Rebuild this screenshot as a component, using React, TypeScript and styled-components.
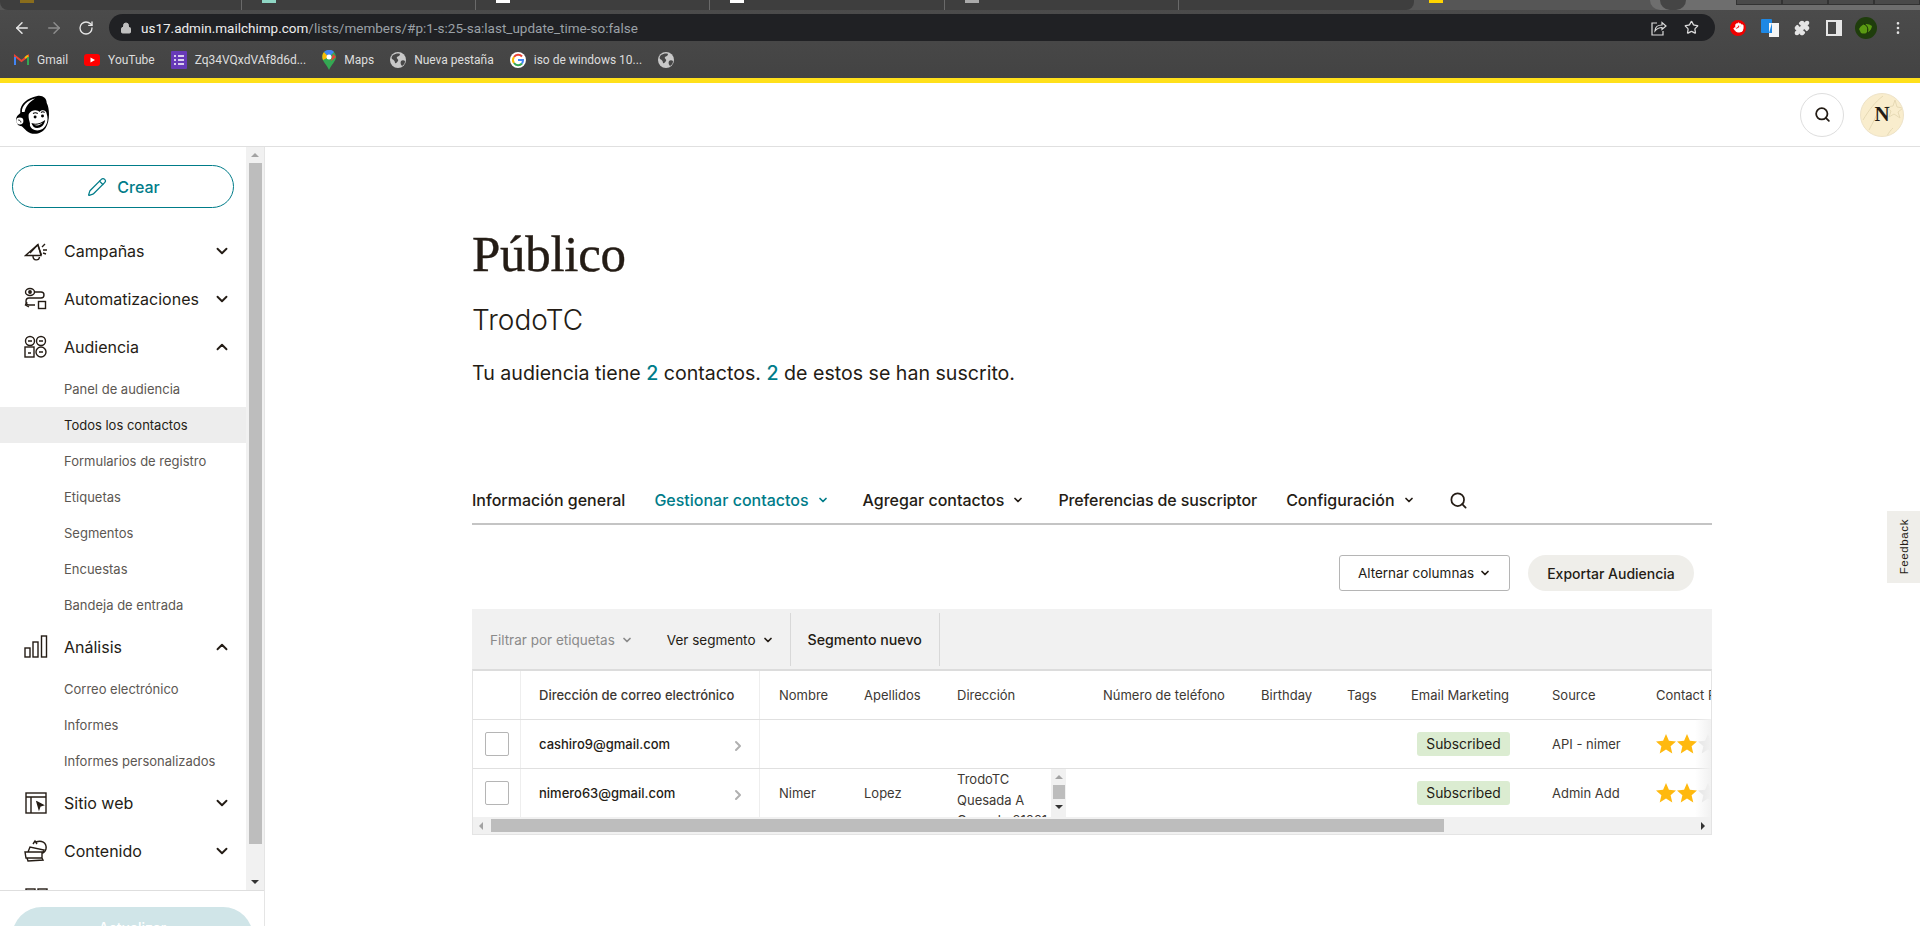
import React from "react";
import styled, { createGlobalStyle } from "styled-components";
import { ArrowLeft, ArrowRight, RotateCw, Lock, Star, Puzzle, EllipsisVertical, Search, Pencil, ChevronDown, ChevronUp, ChevronRight, Hand } from "lucide-react";

const Global = createGlobalStyle`
  html, body { margin: 0; height: 926px; overflow: hidden; background: #fff; }
  #root { height: 926px; }
  * { box-sizing: border-box; }
  body { font-family: Inter, "Liberation Sans", sans-serif; color: #241c15; }
`;

const Page = styled.div`display: flex; flex-direction: column; height: 926px; position: relative; overflow: hidden;`;
const Chrome = styled.div`height: 78px; background: linear-gradient(#4c4c4c, #434343); display: flex; flex-direction: column; font-family: Roboto, "Liberation Sans", sans-serif;`;
const TabStrip = styled.div`height: 10px; display: flex; background: #565656;`;
const TabsDark = styled.div`width: 1414px; height: 10px; background: #3e3e3e; border-radius: 0 0 8px 8px; display: flex;`;
const TabPiece = styled.div`width: 235px; height: 10px; border-right: 1px solid #6a6a6a; padding-left: 20px; &:first-child { width: 243px; }`;
const TabFav = styled.div<{ $c: string }>`width: 14px; height: 3px; background: ${p => p.$c};`;
const TabMid = styled.div`width: 236px; padding-left: 15px; display: flex;`;
const TabActive = styled.div`flex: 1; height: 10px; background: #6e6e6e; border-radius: 0 0 0 10px; display: flex; padding-left: 2px; justify-content: space-between;`;
const TabCircle = styled.div`width: 26px; height: 10px; background: #454545; border-radius: 0 0 13px 13px; margin-left: 8px;`;
const TabBoxes = styled.div`display: flex; width: 184px;`;
const TabBox = styled.div`flex: 1; height: 5px; background: #4a4a4a; border: 1px solid #333; border-top: 0;`;
const Toolbar = styled.div`height: 35px; padding-top: 4px; display: flex; align-items: flex-start;`;
const NavBtn = styled.div<{ $dim?: boolean }>`width: 32px; height: 27px; display: flex; align-items: center; justify-content: center; color: ${p => (p.$dim ? "#8d8d8d" : "#e6e6e6")};`;
const NavBtns = styled.div`display: flex; width: 109px; padding-left: 6px;`;
const AddressBar = styled.div`width: 1606px; height: 27px; border-radius: 14px; background: #202124; display: flex; align-items: center; padding: 0 8px 0 11px; color: #c0c0c0; font-size: 13.5px;`;
const Url = styled.div`margin-left: 9px; flex: 1; color: #9aa0a6; white-space: nowrap;`;
const UrlHost = styled.span`color: #eee;`;
const BarIcon = styled.div`width: 32px; display: flex; justify-content: center; color: #dcdcdc;`;
const Exts = styled.div`display: flex; flex: 1; padding-left: 7px; align-items: center; height: 27px;`;
const Ext = styled.div`width: 32px; display: flex; justify-content: center; align-items: center; color: #e4e4e4;`;
const Bookmarks = styled.div`height: 29px; display: flex; align-items: center; gap: 16px; padding: 0 0 0 14px; font-size: 12px; color: #ddd;`;
const Bookmark = styled.div`display: flex; align-items: center; gap: 8px; white-space: nowrap;`;
const Yellow = styled.div`height: 5px; background: #ffe01b;`;
const Header = styled.header`height: 64px; border-bottom: 1px solid #e0e0e0; display: flex; align-items: center; justify-content: space-between; padding: 0 16px 0 14px;`;
const HeaderRight = styled.div`display: flex; gap: 16px;`;
const RoundBtn = styled.div`width: 44px; height: 44px; border-radius: 50%; border: 1px solid #dedede; display: flex; align-items: center; justify-content: center; background: #fff;`;
const Avatar = styled.div`position: relative; width: 44px; height: 44px; border-radius: 50%; background: #f9edcd; border: 1px solid #eee3c8; display: flex; align-items: center; justify-content: center; overflow: hidden; font: bold 21px "Liberation Serif", serif;`;
const AvatarArt = styled.svg`position: absolute; inset: 0;`;
const AvatarLetter = styled.span`position: relative;`;

const Body = styled.div`flex: 1; display: flex; min-height: 0;`;
const Sidebar = styled.aside`width: 265px; border-right: 1px solid #e5e5e5; display: flex; flex-direction: column; flex: none;`;
const SideTop = styled.div`height: 744px; display: flex; border-bottom: 1px solid #dedede; overflow: hidden;`;
const Nav = styled.nav`width: 246px; padding-top: 18px; overflow: hidden;`;
const CreateBtn = styled.div`margin: 0 0 19px 12px; width: 222px; height: 43px; border: 1px solid #007c89; border-radius: 22px; display: flex; align-items: center; justify-content: center; gap: 10px; padding: 1px 0 0 1px; color: #007c89; font-weight: 500; font-size: 16px;`;
const NavRow = styled.div`height: 48px; display: flex; align-items: center; padding-left: 24px; font-size: 16px; flex: none;`;
const NavIcon = styled.div`width: 40px; display: flex;`;
const NavLabel = styled.div`flex: 1;`;
const NavChev = styled.div`width: 33px; display: flex;`;
const SubRow = styled.div<{ $active?: boolean }>`height: 36px; display: flex; align-items: center; padding-left: 64px; font-size: 13px; color: ${p => (p.$active ? "#241c15" : "#5c5752")}; background: ${p => (p.$active ? "#ededed" : "transparent")};`;
const SideScroll = styled.div`width: 18px; background: #f1f1f1; display: flex; flex-direction: column; align-items: center;`;
const ArrowUp = styled.div<{ $c: string }>`width: 0; height: 0; border: 4px solid transparent; border-top: 0; border-bottom: 4px solid ${p => p.$c}; margin: 6px 0;`;
const ArrowDown = styled.div<{ $c: string }>`width: 0; height: 0; border: 4px solid transparent; border-bottom: 0; border-top: 4px solid ${p => p.$c}; margin: 6px 0;`;
const SideThumb = styled.div`width: 13px; height: 682px; background: #bdbdbd; margin-bottom: 30px;`;
const SideBottom = styled.div`flex: 1; padding: 16px 0 0 12px; overflow: hidden;`;
const UpgradeBtn = styled.div`width: 241px; height: 60px; border-radius: 30px; background: #d0e5e8; color: #fff; font-weight: 500; font-size: 14px; text-align: center; padding-top: 12px;`;

const Main = styled.main`flex: 1; padding: 78px 0 0 207px; min-width: 0;`;
const Column = styled.div`width: 1240px;`;
const Title = styled.h1`margin: 0; font: 400 51px/58px "Liberation Serif", serif; color: #241c15; letter-spacing: -.3px; -webkit-text-stroke: .4px #241c15;`;
const Subtitle = styled.div`margin-top: 20px; font-size: 28px; line-height: 34px; font-weight: 300;`;
const Summary = styled.div`margin-top: 21px; font-size: 19.6px; line-height: 30px;`;
const Num = styled.span`color: #007c89; font-weight: 500;`;
const Tabs = styled.div`margin-top: 93px; height: 44px; border-bottom: 2px solid #c4c4c4; display: flex; align-items: center; gap: 29px; padding-bottom: 4px; font-size: 16px; font-weight: 500;`;
const Tab = styled.div<{ $active?: boolean; $menu?: boolean; $tight?: boolean }>`display: flex; align-items: center; gap: 8px; white-space: nowrap; padding-right: ${p => (p.$menu ? "5px" : "0")}; letter-spacing: ${p => (p.$tight ? "-.12px" : "0")}; color: ${p => (p.$active ? "#007c89" : "#241c15")};`;
const Actions = styled.div`margin-top: 30px; display: flex; justify-content: flex-end; align-items: center; gap: 18px; padding-right: 18px;`;
const ColumnsBtn = styled.div`width: 171px; height: 36px; border: 1px solid #b5b5b5; border-radius: 3px; display: flex; align-items: center; justify-content: center; gap: 5px; font-size: 13.5px;`;
const ExportBtn = styled.div`width: 166px; height: 36px; border-radius: 18px; background: #efeeea; display: flex; align-items: center; justify-content: center; font-size: 14px; font-weight: 500;`;
const FilterBar = styled.div`margin-top: 18px; height: 60px; background: #f1f1f1; display: flex; align-items: stretch; padding: 4px 0 3px; font-size: 13.5px;`;
const Filter = styled.div<{ $muted?: boolean }>`display: flex; align-items: center; gap: 6px; white-space: nowrap; margin-left: ${p => (p.$muted ? "18px" : "34px")}; color: ${p => (p.$muted ? "#8a8a8a" : "#241c15")};`;
const Divider = styled.div`margin-left: 16px; display: flex; align-items: center; border-left: 1px solid #d8d8d8; border-right: 1px solid #d8d8d8; padding: 0 17px; font-size: 14.2px; font-weight: 500; white-space: nowrap;`;
const TableWrap = styled.div`position: relative; border: 1px solid #e4e4e4; border-top: 2px solid #dcdcdc; overflow: hidden;`;
const TableView = styled.div`height: 146px; overflow: hidden; font-size: 13px;`;
const Row = styled.div<{ $h: number }>`display: grid; grid-template-columns: 48px 239px 85px 93px 146px 158px 86px 64px 141px 104px 200px; height: ${p => p.$h}px; border-bottom: 1px solid #e0e0e0; width: 1364px;`;
const Cell = styled.div<{ $line?: boolean; $strong?: boolean }>`display: flex; align-items: center; padding-left: ${p => (p.$line ? "18px" : "19px")}; white-space: nowrap; overflow: hidden; border-right: ${p => (p.$line ? "1px solid #eee" : "0")}; font-weight: ${p => (p.$strong ? 500 : 400)}; color: #3d3833;`;
const EmailCell = styled(Cell)`justify-content: space-between; padding-right: 13px; font-weight: 500; color: #241c15;`;
const RowChevron = styled.span`display: flex; margin-top: 4px;`;
const CheckCell = styled.div`display: flex; align-items: center; padding-left: 12px; border-right: 1px solid #eee;`;
const Check = styled.div`width: 24px; height: 24px; border: 1px solid #b5b5b5; border-radius: 2px; background: #fff;`;
const AddressCell = styled.div`position: relative; padding-left: 19px; overflow: hidden; line-height: 20.5px; color: #3d3833;`;
const InnerBar = styled.div`position: absolute; left: 113px; top: 0; width: 15px; height: 48px; background: #f1f1f1; display: flex; flex-direction: column; align-items: center;`;
const InnerThumb = styled.div`width: 12px; height: 14px; background: #bdbdbd;`;
const Badge = styled.div`margin-left: 6px; width: 93px; height: 24px; border-radius: 3px; background: #dbecd1; display: flex; align-items: center; justify-content: center; color: #241c15; font-size: 13.8px;`;
const Stars = styled.div`display: flex; gap: 1px;`;
const Fade = styled.div`position: absolute; right: 0; top: 48px; bottom: 17px; width: 16px; background: linear-gradient(90deg, rgba(255,255,255,0), #f1f1f1);`;
const HBar = styled.div`height: 17px; background: #f1f1f1; display: flex; align-items: center; justify-content: space-between;`;
const HThumb = styled.div`width: 953px; height: 13px; background: #bdbdbd; margin-left: 18px;`;
const ArrowL = styled.div`position: absolute; left: 6px; width: 0; height: 0; border: 4px solid transparent; border-left: 0; border-right: 4px solid #a3a3a3;`;
const ArrowR = styled.div`width: 0; height: 0; margin-right: 6px; border: 4px solid transparent; border-right: 0; border-left: 4px solid #333;`;
const Feedback = styled.div`position: absolute; right: 0; top: 511px; width: 33px; height: 72px; background: #efeeea; display: flex; align-items: center; justify-content: center;`;
const FeedbackText = styled.span`writing-mode: vertical-rl; transform: rotate(180deg); font-size: 11.5px; letter-spacing: .6px; font-family: "Liberation Sans", sans-serif;`;
const BlockBadge = styled.div`width: 16px; height: 16px; border-radius: 50%; background: #e00; display: flex; align-items: center; justify-content: center; color: #fff;`;

const strokeProps = { fill: "none", stroke: "#241c15", strokeWidth: 1.4 };

const Monkey = () => (
  <svg width="38" height="40" viewBox="0 0 36 40" preserveAspectRatio="none">
    <path d="M6 18C5 10 12 3 22 1c5-1 9 2 9 7 3 6 3 18-1 25-4 6-12 8-18 3-3-3-4-5-6-5-4-1-5-7-3-10 1-1 2-2 3-3z" fill="#000" />
    <path d="M7.500 17C7 11 13 5 20 3.500 14 7 11 12 10 17z" fill="#fff" />
    <circle cx="5.500" cy="26" r="3.400" fill="#fff" />
    <path d="M4 25c1.500 0 2.500 1 2.500 2.500" fill="none" stroke="#000" strokeWidth=".9" />
    <path d="M14 19c3-5 9-4 10-2 2-3 7-2 7 2 2 6 0 12-4 15-5 3-11 1-12-4 1-2-2-6-1-11z" fill="#fff" />
    <circle cx="20" cy="22" r="1.400" fill="#000" />
    <circle cx="27" cy="21" r="1.400" fill="#000" />
    <path d="M18 18.500c1.500-1 3-1 4.500 0M25.500 17.500c1.200-.8 2.500-.8 3.500 0" fill="none" stroke="#000" strokeWidth="1" />
    <path d="M16.500 28c4 1.500 9 .5 13-3-.5 5-4 8-7.500 8-3 0-4.500-2-5.500-5z" fill="#000" />
    <path d="M19 29.500c3 .5 5.500-.3 8-2-1.500 2.500-5.500 4-8 2z" fill="#fff" />
  </svg>
);

const Megaphone = () => (
  <svg width="24" height="24" viewBox="0 0 24 24" {...strokeProps}>
    <path d="M1.500 16.500 14 5.500l3 11z" /><path d="M6 14l8-8.500M14 6.500l3.500 9.500" /><path d="M9 17c0 5 6 5 6.500 1" />
    <path d="M18 8l3-3M19 11h4M19 14l3 1" />
  </svg>
);
const Flow = () => (
  <svg width="24" height="24" viewBox="0 0 24 24" {...strokeProps}>
    <ellipse cx="6" cy="5" rx="4.500" ry="3.500" /><circle cx="6" cy="5" r="1.200" fill="#241c15" />
    <path d="M10 5h7c4 0 4 6 0 6H5c-4 0-4 7 0 7h6" /><path d="M3 15l-1.500 3L5 20" />
    <rect x="14.500" y="14.500" width="7" height="7" />
  </svg>
);
const People = () => (
  <svg width="24" height="24" viewBox="0 0 24 24" {...strokeProps}>
    <circle cx="6" cy="6" r="4.500" /><circle cx="17" cy="6" r="4.500" /><rect x="1" y="12" width="9" height="10" />
    <circle cx="17" cy="17" r="5" /><path d="M4 6h4M15 6h4M15 17h4M4 18h3" />
  </svg>
);
const Bars = () => (
  <svg width="24" height="24" viewBox="0 0 24 24" {...strokeProps}>
    <rect x="1" y="13" width="5" height="9" /><rect x="9" y="7" width="5" height="15" /><rect x="17.500" y="1" width="5" height="21" />
  </svg>
);
const Website = () => (
  <svg width="24" height="24" viewBox="0 0 24 24" {...strokeProps}>
    <rect x="2" y="2" width="20" height="20" /><path d="M2 6h20M7 6v16" />
    <path d="M13 11l6 3-3 1-1 3z" fill="#241c15" />
  </svg>
);
const Content = () => (
  <svg width="24" height="24" viewBox="0 0 24 24" {...strokeProps}>
    <path d="M1 13h17v6H2zM4 13l2-5 14 3-1 2M3 19l1 3 15-1-1-2" /><path d="M12 3c5-2 11 0 10 7-1 3-3 4-4 4" /><path d="M9 5l2-3 2 3" />
  </svg>
);
const Grid4 = () => (
  <svg width="24" height="24" viewBox="0 0 24 24" {...strokeProps}>
    <rect x="2" y="2" width="9" height="9" /><rect x="14" y="2" width="9" height="9" />
  </svg>
);

const GmailIcon = () => (
  <svg width="15" height="12" viewBox="0 0 15 12">
    <path d="M1 11V2l6.500 5L14 2v9" fill="none" stroke="#ea4335" strokeWidth="2" />
    <path d="M1 3v8" stroke="#4285f4" strokeWidth="2" /><path d="M14 3v8" stroke="#34a853" strokeWidth="2" /><path d="M11 4l3-2.500" stroke="#fbbc04" strokeWidth="2" />
  </svg>
);
const YouTubeIcon = () => (
  <svg width="16" height="16" viewBox="0 0 16 16"><rect y="2" width="16" height="12" rx="3" fill="#f00" /><path d="M6.500 5.500v5L11 8z" fill="#fff" /></svg>
);
const FormIcon = () => (
  <svg width="16" height="18" viewBox="0 0 16 18"><rect width="16" height="18" rx="1" fill="#673ab7" /><path d="M3 5h2M7 5h6M3 9h2M7 9h6M3 13h2M7 13h6" stroke="#fff" strokeWidth="1.600" /></svg>
);
const MapsIcon = () => (
  <svg width="14" height="20" viewBox="0 0 14 20"><path d="M7 0a7 7 0 0 1 7 7c0 4-5 8-7 13C5 15 0 11 0 7a7 7 0 0 1 7-7z" fill="#34a853" /><path d="M2 2l5 5-6 3C0 7 0 4 2 2z" fill="#fbbc04" /><path d="M2 2C5-1 10-1 12 2L7 7z" fill="#4285f4" /><circle cx="7" cy="7" r="2.500" fill="#fff" /><path d="M11 4l3 3-5 4z" fill="#ea4335" /></svg>
);
const GoogleIcon = () => (
  <svg width="16" height="16" viewBox="0 0 16 16">
    <circle cx="8" cy="8" r="8" fill="#fff" />
    <path d="M12 4.500A5 5 0 0 0 4 5" fill="none" stroke="#ea4335" strokeWidth="2" /><path d="M4 5a5 5 0 0 0 0 6" fill="none" stroke="#fbbc04" strokeWidth="2" />
    <path d="M4 11a5 5 0 0 0 8 .5" fill="none" stroke="#34a853" strokeWidth="2" /><path d="M8 8h5c0 1.500-.4 2.500-1 3.500" fill="none" stroke="#4285f4" strokeWidth="2" />
  </svg>
);
const GlobeFilled = () => (
  <svg width="16" height="16" viewBox="0 0 16 16">
    <circle cx="8" cy="8" r="8" fill="#c8c8c8" />
    <path d="M3 3c2-1 5-2 7-1 0 2-2 2-3 3-1 2 2 2 1 4-1 1-2 3-3 2 0-2-1-3-3-4-1-1 0-3 1-4zM11 9c1-1 3-1 4 0 0 2-1 4-3 5-1-1-2-3-1-5z" fill="#474747" />
  </svg>
);
const ShareIcon = () => (
  <svg width="16" height="16" viewBox="0 0 16 16" fill="none" stroke="#dcdcdc" strokeWidth="1.200">
    <path d="M6 3H1v12h11v-4" /><path d="M4 11c0-4 3-6 7-6V2.500L15 6l-4 3.500V7.500c-3 0-5 1-7 3.500z" />
  </svg>
);
const TranslateIcon = () => (
  <svg width="18" height="18" viewBox="0 0 18 18"><rect x="0" y="0" width="11" height="14" rx="1" fill="#1e88e5" /><rect x="8" y="4" width="10" height="14" fill="#f5f5f5" /><path d="M11 4l-3 10h3z" fill="#1e88e5" /></svg>
);
const ProfileIcon = () => (
  <svg width="22" height="22" viewBox="0 0 22 22"><circle cx="11" cy="11" r="11" fill="#1f3d0c" /><path d="M4 12c3-6 9-6 13-3-1 6-7 9-11 7z" fill="#5a9a12" /><path d="M9 7c3 1 5 5 3 9" stroke="#0e2006" fill="none" /></svg>
);
const PanelIcon = () => (
  <svg width="16" height="16" viewBox="0 0 16 16"><rect width="16" height="16" fill="#e6e6e6" /><rect x="2" y="2" width="8" height="12" fill="#474747" /></svg>
);
const StarShape = ({ c }: { c: string }) => (
  <svg width="20" height="20" viewBox="0 0 20 20"><path d="M10 0l2.900 6.800 7.100.7-5.400 4.700 1.700 7.300L10 15.600 3.700 19.500l1.700-7.300L0 7.500l7.100-.7z" fill={c} /></svg>
);
const StarRow = () => (
  <Stars><StarShape c="#ffb90f" /><StarShape c="#ffb90f" /><StarShape c="#e3e3e3" /></Stars>
);
const Down = ({ s = 12 }: { s?: number }) => <ChevronDown size={s} strokeWidth={3.5} />;

const main = [
  { icon: <Megaphone />, label: "Campañas" },
  { icon: <Flow />, label: "Automatizaciones" },
  { icon: <People />, label: "Audiencia", open: true, subs: ["Panel de audiencia", "Todos los contactos", "Formularios de registro", "Etiquetas", "Segmentos", "Encuestas", "Bandeja de entrada"] },
  { icon: <Bars />, label: "Análisis", open: true, subs: ["Correo electrónico", "Informes", "Informes personalizados"] },
  { icon: <Website />, label: "Sitio web" },
  { icon: <Content />, label: "Contenido" },
  { icon: <Grid4 />, label: "Integraciones" },
];

const headers = ["Nombre", "Apellidos", "Dirección", "Número de teléfono", "Birthday", "Tags", "Email Marketing", "Source", "Contact Rating"];
const favs = ["#8a6d1c", "#8fd6c4", "#fff", "#fff", "#aaa", "#555"];

export default function App() {
  return (
    <Page>
      <Global />
      <Chrome>
        <TabStrip>
          <TabsDark>
            {favs.map((c, i) => (i < 5 ? <TabPiece key={i}><TabFav $c={c} /></TabPiece> : <TabMid key={i} />))}
          </TabsDark>
          <TabMid><TabFav $c="#ffd400" /></TabMid>
          <TabActive><TabCircle /><TabBoxes><TabBox /><TabBox /><TabBox /><TabBox /></TabBoxes></TabActive>
        </TabStrip>
        <Toolbar>
          <NavBtns>
            <NavBtn><ArrowLeft size={18} /></NavBtn>
            <NavBtn $dim><ArrowRight size={18} /></NavBtn>
            <NavBtn><RotateCw size={16} /></NavBtn>
          </NavBtns>
          <AddressBar>
            <Lock size={12} fill="#c0c0c0" />
            <Url><UrlHost>us17.admin.mailchimp.com</UrlHost>/lists/members/#p:1-s:25-sa:last_update_time-so:false</Url>
            <BarIcon><ShareIcon /></BarIcon>
            <BarIcon><Star size={15} /></BarIcon>
          </AddressBar>
          <Exts>
            <Ext><BlockBadge><Hand size={11} fill="#fff" /></BlockBadge></Ext>
            <Ext><TranslateIcon /></Ext>
            <Ext><Puzzle size={16} fill="#e4e4e4" /></Ext>
            <Ext><PanelIcon /></Ext>
            <Ext><ProfileIcon /></Ext>
            <Ext><EllipsisVertical size={16} /></Ext>
          </Exts>
        </Toolbar>
        <Bookmarks>
          <Bookmark><GmailIcon />Gmail</Bookmark>
          <Bookmark><YouTubeIcon />YouTube</Bookmark>
          <Bookmark><FormIcon />Zq34VQxdVAf8d6d...</Bookmark>
          <Bookmark><MapsIcon />Maps</Bookmark>
          <Bookmark><GlobeFilled />Nueva pestaña</Bookmark>
          <Bookmark><GoogleIcon />iso de windows 10...</Bookmark>
          <Bookmark><GlobeFilled /></Bookmark>
        </Bookmarks>
      </Chrome>
      <Yellow />
      <Header>
        <Monkey />
        <HeaderRight>
          <RoundBtn><Search size={17} strokeWidth={2.5} color="#241c15" /></RoundBtn>
          <Avatar>
            <AvatarArt width="44" height="44" viewBox="0 0 44 44" fill="none" stroke="#e6d9b4" strokeWidth="1">
              <path d="M2 26c6-10 12-18 20-24M8 36c4-8 8-14 10-22M34 6l2 7 6 1-5 4 2 6-6-4-5 3 2-6-5-4 7-1zM26 42c2-4 4-6 6-8" />
            </AvatarArt>
            <AvatarLetter>N</AvatarLetter>
          </Avatar>
        </HeaderRight>
      </Header>
      <Body>
        <Sidebar>
          <SideTop>
            <Nav>
              <CreateBtn><Pencil size={20} strokeWidth={1.5} />Crear</CreateBtn>
              {main.map(m => (
                <React.Fragment key={m.label}>
                  <NavRow>
                    <NavIcon>{m.icon}</NavIcon>
                    <NavLabel>{m.label}</NavLabel>
                    <NavChev>{m.open ? <ChevronUp size={18} strokeWidth={2.5} /> : <ChevronDown size={18} strokeWidth={2.5} />}</NavChev>
                  </NavRow>
                  {m.subs?.map(s => <SubRow key={s} $active={s === "Todos los contactos"}>{s}</SubRow>)}
                </React.Fragment>
              ))}
            </Nav>
            <SideScroll>
              <ArrowUp $c="#a3a3a3" />
              <SideThumb />
              <ArrowDown $c="#333" />
            </SideScroll>
          </SideTop>
          <SideBottom><UpgradeBtn>Actualizar</UpgradeBtn></SideBottom>
        </Sidebar>
        <Main>
          <Column>
            <Title>Público</Title>
            <Subtitle>TrodoTC</Subtitle>
            <Summary>Tu audiencia tiene <Num>2</Num> contactos. <Num>2</Num> de estos se han suscrito.</Summary>
            <Tabs>
              <Tab>Información general</Tab>
              <Tab $active $menu>Gestionar contactos <Down /></Tab>
              <Tab $menu>Agregar contactos <Down /></Tab>
              <Tab $tight>Preferencias de suscriptor</Tab>
              <Tab $menu>Configuración <Down /></Tab>
              <Tab><Search size={19} strokeWidth={2.2} /></Tab>
            </Tabs>
            <Actions>
              <ColumnsBtn>Alternar columnas <Down /></ColumnsBtn>
              <ExportBtn>Exportar Audiencia</ExportBtn>
            </Actions>
            <FilterBar>
              <Filter $muted>Filtrar por etiquetas <Down /></Filter>
              <Filter>Ver segmento <Down /></Filter>
              <Divider>Segmento nuevo</Divider>
            </FilterBar>
            <TableWrap>
              <TableView>
                <Row $h={49}>
                  <CheckCell />
                  <Cell $line $strong>Dirección de correo electrónico</Cell>
                  {headers.map(h => <Cell key={h}>{h}</Cell>)}
                </Row>
                <Row $h={49}>
                  <CheckCell><Check /></CheckCell>
                  <EmailCell $line>cashiro9@gmail.com<RowChevron><ChevronRight size={16} color="#b0b0b0" strokeWidth={3} /></RowChevron></EmailCell>
                  <Cell /><Cell /><Cell /><Cell /><Cell /><Cell />
                  <Cell><Badge>Subscribed</Badge></Cell>
                  <Cell>API - nimer</Cell>
                  <Cell><StarRow /></Cell>
                </Row>
                <Row $h={49}>
                  <CheckCell><Check /></CheckCell>
                  <EmailCell $line>nimero63@gmail.com<RowChevron><ChevronRight size={16} color="#b0b0b0" strokeWidth={3} /></RowChevron></EmailCell>
                  <Cell>Nimer</Cell>
                  <Cell>Lopez</Cell>
                  <AddressCell>
                    TrodoTC<br />Quesada A<br />Carmelo 21021
                    <InnerBar><ArrowUp $c="#a3a3a3" /><InnerThumb /><ArrowDown $c="#333" /></InnerBar>
                  </AddressCell>
                  <Cell /><Cell /><Cell />
                  <Cell><Badge>Subscribed</Badge></Cell>
                  <Cell>Admin Add</Cell>
                  <Cell><StarRow /></Cell>
                </Row>
              </TableView>
              <Fade />
              <HBar>
                <ArrowL />
                <HThumb />
                <ArrowR />
              </HBar>
            </TableWrap>
          </Column>
        </Main>
      </Body>
      <Feedback><FeedbackText>Feedback</FeedbackText></Feedback>
    </Page>
  );
}
